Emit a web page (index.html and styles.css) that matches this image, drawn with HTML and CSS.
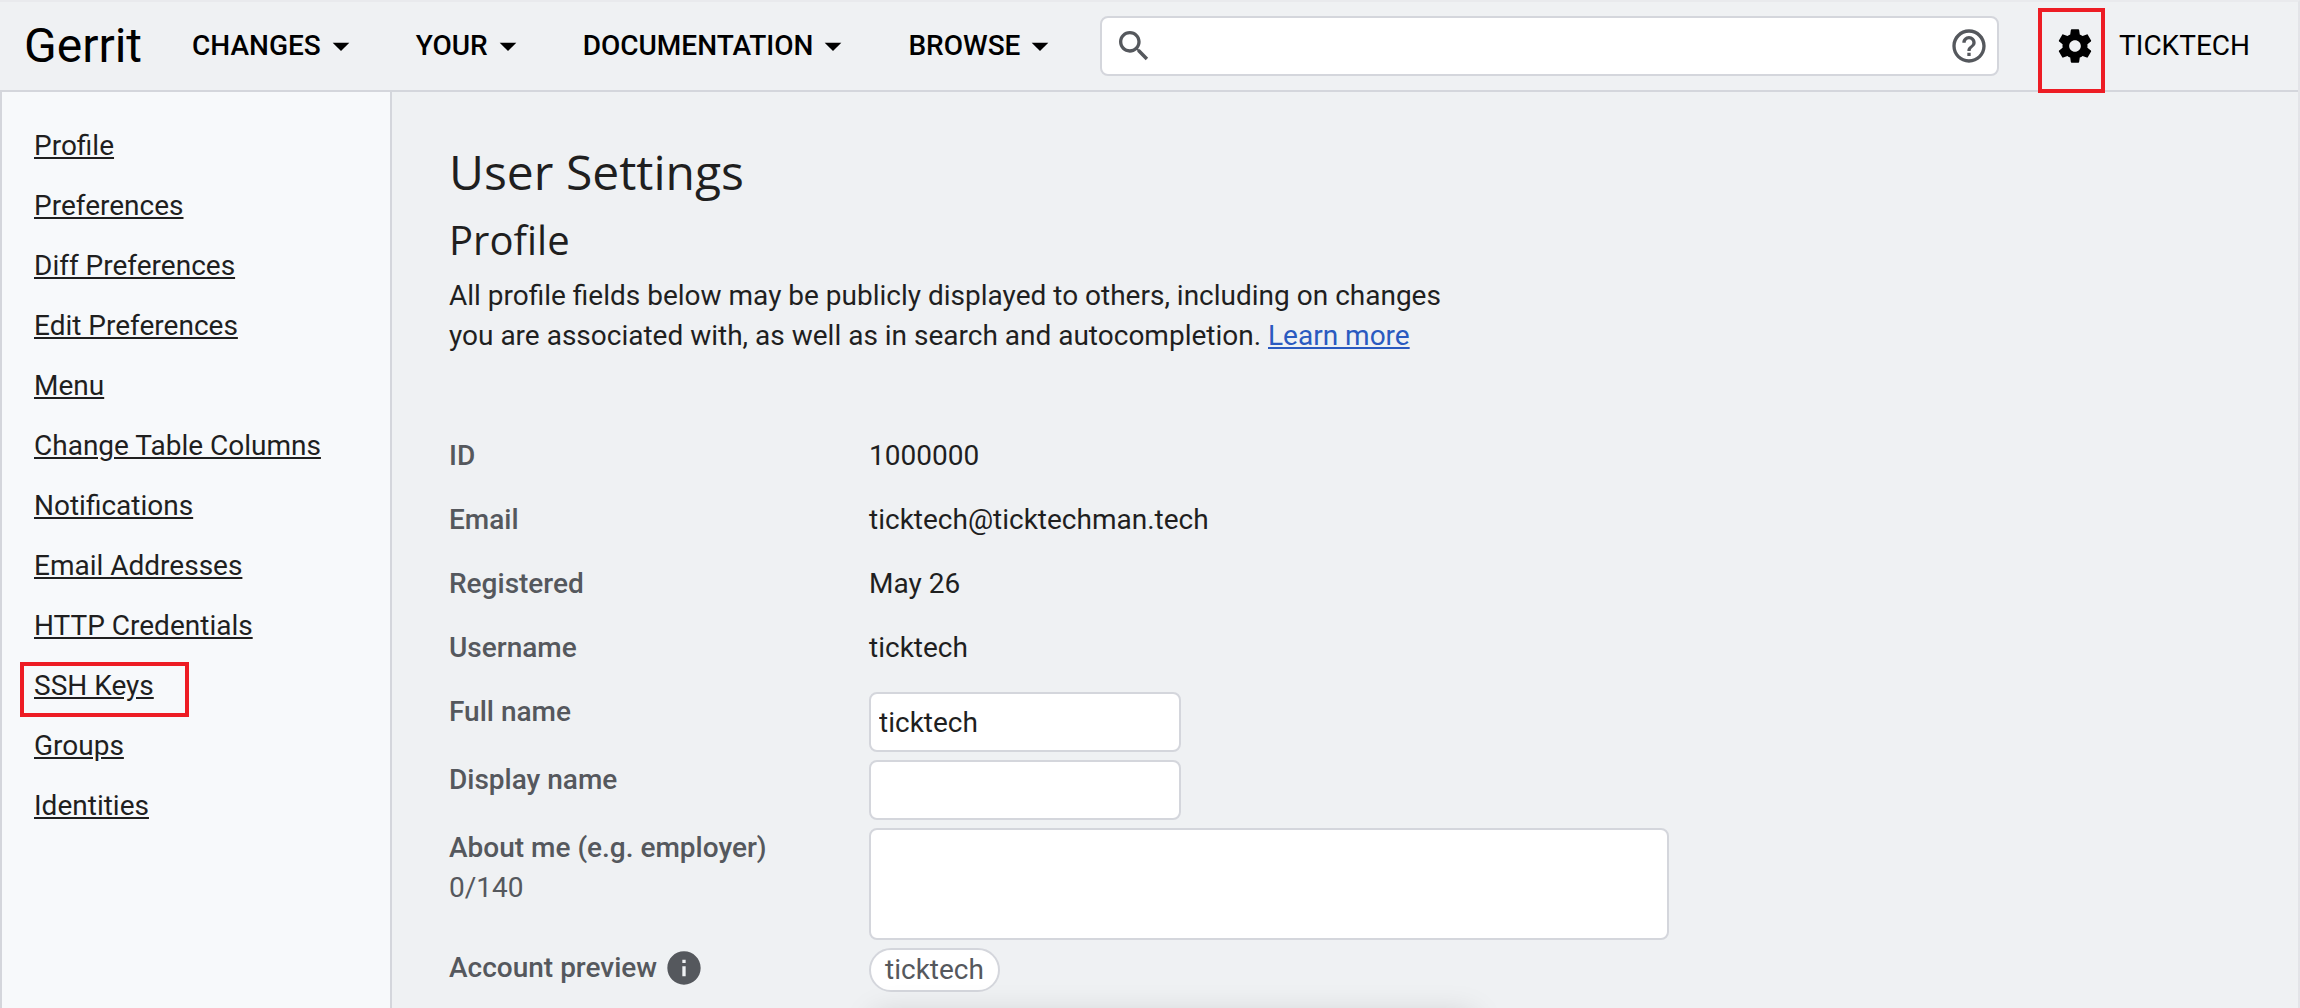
FILE: index.html
```html
<!DOCTYPE html>
<html lang="en">
<head>
<meta charset="utf-8">
<title>Settings · Gerrit Code Review</title>
<link rel="stylesheet" href="styles.css">
</head>
<body>
<header class="topbar">
  <a class="brand" href="#">Gerrit</a>
  <nav class="menus" aria-label="Main">
    <button class="menu" type="button">CHANGES<svg class="icon" viewBox="0 0 24 24" aria-hidden="true"><path d="M7 10l5 5 5-5z"/></svg></button>
    <button class="menu" type="button">YOUR<svg class="icon" viewBox="0 0 24 24" aria-hidden="true"><path d="M7 10l5 5 5-5z"/></svg></button>
    <button class="menu" type="button">DOCUMENTATION<svg class="icon" viewBox="0 0 24 24" aria-hidden="true"><path d="M7 10l5 5 5-5z"/></svg></button>
    <button class="menu" type="button">BROWSE<svg class="icon" viewBox="0 0 24 24" aria-hidden="true"><path d="M7 10l5 5 5-5z"/></svg></button>
  </nav>
  <form class="search" role="search">
    <svg class="icon" viewBox="0 0 24 24" aria-hidden="true"><path d="M15.5 14h-.79l-.28-.27C15.41 12.59 16 11.11 16 9.5 16 5.91 13.09 3 9.5 3S3 5.91 3 9.5 5.91 16 9.5 16c1.61 0 3.09-.59 4.23-1.57l.27.28v.79l5 4.99L20.49 19l-4.99-5zm-6 0C7.01 14 5 11.99 5 9.5S7.01 5 9.5 5 14 7.01 14 9.5 11.99 14 9.5 14z"/></svg>
    <input class="search-input" type="text" aria-label="Search">
    <a class="icon-link" href="#" aria-label="Search help"><svg class="icon" viewBox="0 0 24 24" aria-hidden="true"><path d="M11 18h2v-2h-2v2zm1-16C6.48 2 2 6.48 2 12s4.48 10 10 10 10-4.48 10-10S17.52 2 12 2zm0 18c-4.41 0-8-3.59-8-8s3.59-8 8-8 8 3.59 8 8-3.59 8-8 8zm0-14c-2.21 0-4 1.79-4 4h2c0-1.1.9-2 2-2s2 .9 2 2c0 2-3 1.75-3 5h2c0-2.25 3-2.5 3-5 0-2.21-1.79-4-4-4z"/></svg></a>
  </form>
  <div class="account">
    <a class="icon-link marked gear" href="#" aria-label="Settings"><svg class="icon" viewBox="0 0 24 24" aria-hidden="true"><path d="M19.43 12.98c.04-.32.07-.64.07-.98s-.03-.66-.07-.98l2.11-1.65c.19-.15.24-.42.12-.64l-2-3.46c-.12-.22-.39-.3-.61-.22l-2.49 1c-.52-.4-1.08-.73-1.69-.98l-.38-2.65C14.46 2.18 14.25 2 14 2h-4c-.25 0-.46.18-.49.42l-.38 2.65c-.61.25-1.17.59-1.69.98l-2.49-1c-.23-.09-.49 0-.61.22l-2 3.46c-.13.22-.07.49.12.64l2.11 1.65c-.04.32-.07.65-.07.98s.03.66.07.98l-2.11 1.65c-.19.15-.24.42-.12.64l2 3.46c.12.22.39.3.61.22l2.49-1c.52.4 1.08.73 1.69.98l.38 2.65c.03.24.24.42.49.42h4c.25 0 .46-.18.49-.42l.38-2.65c.61-.25 1.17-.59 1.69-.98l2.49 1c.23.09.49 0 .61-.22l2-3.46c.12-.22.07-.49-.12-.64l-2.11-1.65zM12 15.5c-1.93 0-3.5-1.57-3.5-3.5s1.57-3.5 3.5-3.5 3.5 1.57 3.5 3.5-1.57 3.5-3.5 3.5z"/></svg></a>
    <button class="user" type="button">TICKTECH</button>
  </div>
</header>
<div class="page">
  <nav class="sidebar" aria-label="Settings sections">
    <ul class="sections">
      <li><a href="#">Profile</a></li>
      <li><a href="#">Preferences</a></li>
      <li><a href="#">Diff Preferences</a></li>
      <li><a href="#">Edit Preferences</a></li>
      <li><a href="#">Menu</a></li>
      <li><a href="#">Change Table Columns</a></li>
      <li><a href="#">Notifications</a></li>
      <li><a href="#">Email Addresses</a></li>
      <li><a href="#">HTTP Credentials</a></li>
      <li class="marked ssh"><a href="#">SSH Keys</a></li>
      <li><a href="#">Groups</a></li>
      <li><a href="#">Identities</a></li>
    </ul>
  </nav>
  <main class="content">
    <h1 class="title">User Settings</h1>
    <h2 class="subtitle">Profile</h2>
    <p class="intro">All profile fields below may be publicly displayed to others, including on changes you are associated with, as well as in search and autocompletion. <a class="learn" href="#">Learn more</a></p>
    <form class="fields">
      <div class="row"><span class="label">ID</span><span class="value">1000000</span></div>
      <div class="row"><span class="label">Email</span><span class="value">ticktech@ticktechman.tech</span></div>
      <div class="row"><span class="label">Registered</span><span class="value">May 26</span></div>
      <div class="row"><span class="label">Username</span><span class="value">ticktech</span></div>
      <div class="row"><label class="label" for="full-name">Full name</label><input class="box" id="full-name" type="text" value="ticktech"></div>
      <div class="row"><label class="label" for="display-name">Display name</label><input class="box" id="display-name" type="text"></div>
      <div class="row"><label class="label" for="about">About me (e.g. employer)<span class="count">0/140</span></label><textarea class="box about" id="about"></textarea></div>
      <div class="row"><span class="label preview">Account preview<svg class="icon" viewBox="0 0 24 24" aria-hidden="true"><path d="M12 2C6.48 2 2 6.48 2 12s4.48 10 10 10 10-4.48 10-10S17.52 2 12 2zm1 15h-2v-6h2v6zm0-8h-2V7h2v2z"/></svg></span><span class="chip">ticktech</span></div>
    </form>
  </main>
</div>
<div class="toast"></div>
</body>
</html>
```

FILE: styles.css
```css
* {
  box-sizing: border-box;
}

body {
  margin: 0;
  min-height: 100vh;
  display: flex;
  flex-direction: column;
  border-top: 2px solid #e9eaed;
  border-right: 2px solid #e3e4e8;
  background: #eff1f3;
  color: #1f1f1f;
  font: 28px/40px Roboto, "Liberation Sans", sans-serif;
  overflow: hidden;
}

button,
input,
textarea {
  font: inherit;
  color: inherit;
}

button {
  padding: 0;
  border: 0;
  background: none;
}

.icon {
  display: block;
  flex: none;
  width: 40px;
  height: 40px;
  fill: currentColor;
}

.icon-link {
  color: inherit;
}

.marked {
  position: relative;
}

.marked::after {
  content: "";
  position: absolute;
  border: 4px solid #ed1c24;
}

.topbar {
  display: flex;
  align-items: center;
  height: 90px;
  padding: 0 48px 0 24px;
  border-bottom: 2px solid #d4d6dc;
  color: #000;
}

.brand {
  color: inherit;
  font-size: 48px;
  text-decoration: none;
}

.menus {
  display: flex;
  gap: 55px;
  margin: 0 40px 0 50px;
}

.menu {
  display: flex;
  font-weight: 500;
}

.search {
  flex: 1;
  display: flex;
  align-items: center;
  height: 60px;
  padding: 0 8px 0 12px;
  border: 2px solid #d4d6dc;
  border-radius: 8px;
  background: #fff;
  color: #55585d;
}

.search-input {
  flex: 1;
  min-width: 0;
  border: 0;
  outline: 0;
  background: none;
}

.account {
  display: flex;
  gap: 24px;
  margin-left: 56px;
}

.gear::after {
  inset: -18px -10px -27px -17px;
}

.page {
  flex: 1;
  display: flex;
}

.sidebar {
  flex: none;
  width: 392px;
  border: solid #d4d6dc;
  border-width: 0 2px;
  background: #f7f9fb;
}

.sections {
  margin: 0;
  padding: 24px 32px;
  list-style: none;
}

.sections li {
  padding: 10px 0;
}

.sections a {
  color: inherit;
}

.ssh::after {
  inset: 6px 169px -1px -14px;
}

.content {
  flex: 1;
  padding: 48px 56px 0 57px;
}

.title,
.subtitle {
  margin: 0;
  font-family: "Open Sans", sans-serif;
  font-weight: 400;
}

.title {
  font-size: 48px;
  line-height: 64px;
}

.subtitle {
  margin-top: 8px;
  font-size: 40px;
  line-height: 56px;
}

.intro {
  max-width: 1000px;
  margin: 8px 0 76px;
}

.learn {
  color: #2a5ac0;
}

.row {
  display: grid;
  grid-template-columns: 420px 1fr;
  align-items: start;
  min-height: 64px;
  padding: 4px 0;
}

.label {
  color: #55585d;
  font-weight: 500;
}

.count {
  display: block;
  font-weight: 400;
}

.preview {
  display: flex;
  gap: 7px;
}

.box {
  width: 312px;
  height: 60px;
  padding: 0 8px;
  border: 2px solid #d4d6dc;
  border-radius: 8px;
  background: #fff;
}

.about {
  width: 100%;
  max-width: 800px;
  height: 112px;
  resize: none;
}

.chip {
  justify-self: start;
  padding: 0 14px;
  border: 2px solid #d4d6dc;
  border-radius: 22px;
  background: #fff;
  color: #55585d;
}

.toast {
  position: fixed;
  top: 100%;
  left: 50%;
  width: 600px;
  height: 96px;
  margin-left: -276px;
  box-shadow: 0 7px 30px rgba(0, 0, 0, 0.15);
}
```
